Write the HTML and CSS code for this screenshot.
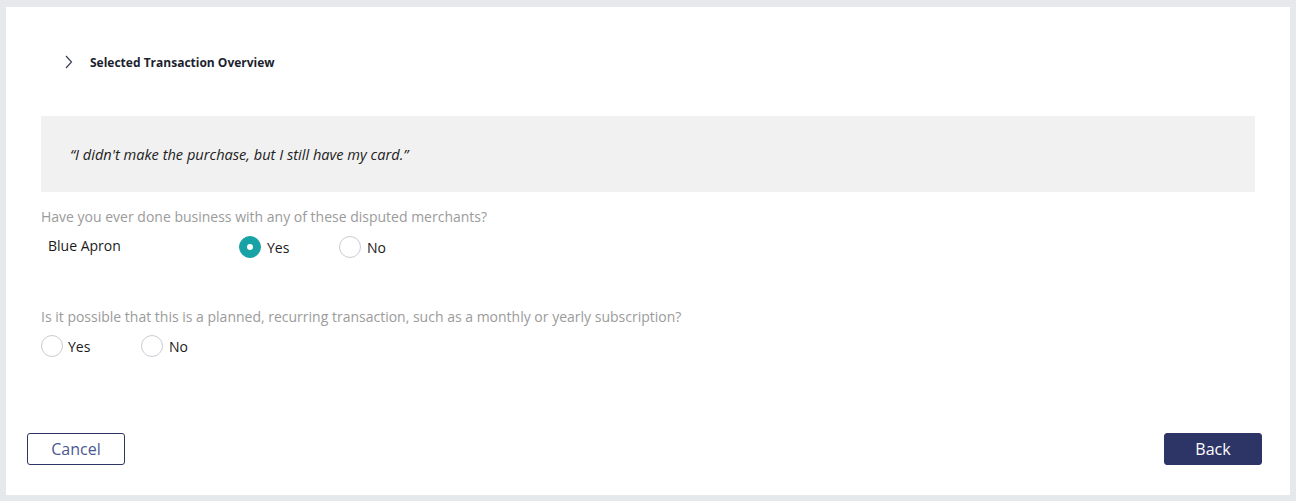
FILE: index.html
```html
<!DOCTYPE html>
<html>
<head>
<meta charset="utf-8">
<link rel="stylesheet" href="styles.css">
</head>
<body>
<div class="panel">
  <div class="overview">
    <svg class="chev" width="8" height="14" viewBox="0 0 8 14"><path d="M1 1 L6.5 7 L1 13" fill="none" stroke="#3a3f55" stroke-width="1.2"/></svg>
    <span class="ov-title">Selected Transaction Overview</span>
  </div>
  <div class="quote">“I didn't make the purchase, but I still have my card.”</div>
  <div class="q q1">Have you ever done business with any of these disputed merchants?</div>
  <div class="merchant-row">
    <span class="merchant">Blue Apron</span>
    <label class="opt opt-wide"><span class="radio checked"></span><span>Yes</span></label>
    <label class="opt"><span class="radio"></span><span>No</span></label>
  </div>
  <div class="q q2">Is it possible that this is a planned, recurring transaction, such as a monthly or yearly subscription?</div>
  <div class="opts2">
    <label class="opt opt-wide2"><span class="radio"></span><span>Yes</span></label>
    <label class="opt"><span class="radio"></span><span>No</span></label>
  </div>
  <div class="actions">
    <button class="btn cancel">Cancel</button>
    <button class="btn back">Back</button>
  </div>
</div>
</body>
</html>
```
FILE: styles.css
```css
html, body { margin: 0; padding: 0; }
body {
  background: #e5e9ec;
  font-family: "Open Sans", "Noto Sans", sans-serif;
  padding: 7px 6px 6px 6px;
  height: 501px;
  box-sizing: border-box;
}
.panel {
  background: #fff;
  height: 488px;
  box-sizing: border-box;
  padding: 0 35px 0 35px;
  display: flex;
  flex-direction: column;
}
.overview {
  display: flex;
  align-items: center;
  height: 14px;
  margin-top: 48px;
  padding-left: 24px;
}
.chev { display: block; }
.ov-title {
  font-size: 12px;
  font-weight: 700;
  color: #1c1f2e;
  margin-left: 17px;
}
.quote {
  margin-top: 47px;
  height: 76px;
  background: #f1f1f1;
  display: flex;
  align-items: center;
  padding-left: 29px;
  font-style: italic;
  font-size: 14.6px;
  color: #222;
}
.q {
  font-size: 14px;
  color: #9b9b9b;
  line-height: 20px;
}
.q1 { margin-top: 15px; }
.merchant-row {
  display: flex;
  align-items: center;
  height: 24px;
  margin-top: 8px;
}
.merchant {
  font-size: 14px;
  color: #1a1a1a;
  width: 191px;
  padding-left: 7px;
  margin-top: -4px;
}
.opt {
  display: flex;
  align-items: center;
  font-size: 14px;
  color: #1a1a1a;
  gap: 6px;
}
.opt-wide { width: 100px; }
.opt-wide2 { width: 100px; gap: 5px; }
.radio {
  width: 20px;
  height: 20px;
  border-radius: 50%;
  border: 1px solid #c9ccd3;
  box-sizing: content-box;
  display: inline-block;
  position: relative;
}
.radio.checked {
  border-color: #17a3a6;
  background: #17a3a6;
}
.radio.checked::after {
  content: "";
  position: absolute;
  left: 7px;
  top: 7px;
  width: 6px;
  height: 6px;
  border-radius: 50%;
  background: #fff;
}
.q2 { margin-top: 48px; }
.opts2 {
  display: flex;
  align-items: center;
  height: 24px;
  margin-top: 7px;
}
.actions {
  display: flex;
  justify-content: space-between;
  margin-top: 75px;
  margin-left: -14px;
  margin-right: -7px;
}
.btn {
  width: 98px;
  height: 32px;
  border-radius: 3px;
  font-family: "Open Sans", "Noto Sans", sans-serif;
  font-size: 16px;
  padding: 0;
  cursor: pointer;
}
.cancel {
  background: #fff;
  border: 1px solid #2d3466;
  color: #4a5793;
}
.back {
  background: #2d3466;
  border: 1px solid #2d3466;
  color: #fff;
}
```
